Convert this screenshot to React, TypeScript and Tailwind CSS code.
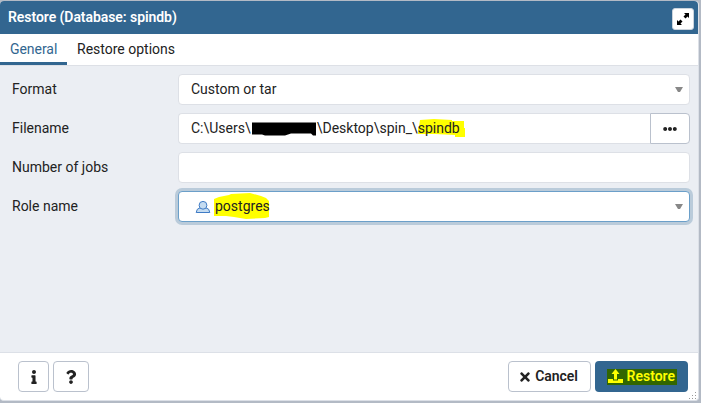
import React from "react";
import { FaEllipsisH, FaInfo, FaQuestion, FaTimes } from "react-icons/fa";

function Caret() {
  return (
    <svg className="ml-auto h-[5px] w-[8px]" viewBox="0 0 8 5">
      <path d="M0 0h8L5 5H3z" fill="#888" />
    </svg>
  );
}

function Row({ label, children }: { label: string; children: React.ReactNode }) {
  return (
    <div className="flex h-[31px] items-center">
      <div className="w-[166px] shrink-0">{label}</div>
      {children}
    </div>
  );
}

const field = "flex h-[31px] w-[512px] items-center rounded border border-[#dde0e6] bg-white pl-3 pr-[6px]";
const button = "flex h-[31px] items-center justify-center rounded border border-[#bac1cd] bg-white";

export default function App() {
  return (
    <div className="h-[403px] w-[701px] overflow-hidden bg-[#b3bac5] pr-[2px] pb-[2px] pt-px font-['Roboto',sans-serif] text-[14px] leading-[21px] text-[#222]">
      <div className="flex h-[400px] w-[699px] flex-col rounded-[4px] border-r border-b border-[#dce0e7] bg-white">
        <header className="flex h-[33px] shrink-0 items-center justify-between rounded-t-[4px] bg-[#326690] pl-2 pr-[4px] font-semibold text-white">
          <h1 className="tracking-[-0.06px]">Restore (Database: spindb)</h1>
          <button className="mt-[3px] h-[22px] w-[22px] rounded-[3px] border border-[#cbd4dd] bg-white">
            <svg className="h-5 w-5" viewBox="0 0 20 20" fill="#000">
              <path d="M11 4h5v5l-1.500-1.500-2 2-2-2 2-2zM4 11v5h5l-1.500-1.500 2-2-2-2-2 2z" />
            </svg>
          </button>
        </header>
        <nav className="flex h-[32px] shrink-0 border-b border-[#dde0e6]">
          <div className="h-[31px] w-[67px] border-b-[3px] border-[#326690] pl-[10px] pt-[5px] tracking-[-0.05px] text-[#326690]">General</div>
          <div className="pl-[10px] pt-[5px]">Restore options</div>
        </nav>
        <main className="flex h-[286px] shrink-0 flex-col gap-2 bg-[#ebeef3] pl-[12px] pt-2">
          <Row label="Format">
            <div className={field}>Custom or tar<Caret /></div>
          </Row>
          <Row label="Filename">
            <div className="flex h-[31px] w-[472px] items-center rounded-l border border-r-0 border-[#dde0e6] bg-white pl-3">
              <span>C:\Users\</span>
              <svg className="h-[15px] w-[66px] shrink-0" viewBox="0 0 66 15">
                <path d="M1 1.500h64v13h-3l-2-2H40l-6 2H14l-3-1H1z" fill="#000" />
              </svg>
              <span>\Desktop\spin_\</span>
              <span className="relative">
                <svg className="absolute -left-px top-[1px] h-[19px] w-[48px]" viewBox="0 0 48 19">
                  <path d="M3 1l14-1 18 1v1h12v7h1v9H38v-2L18 15H1V8h1z" fill="#ff0" />
                </svg>
                <span className="relative">spindb</span>
              </span>
            </div>
            <button className="flex h-[31px] w-[40px] items-center justify-center rounded-r border border-[#bac1cd] bg-white">
              <FaEllipsisH size={14} />
            </button>
          </Row>
          <Row label="Number of jobs"><div className={field} /></Row>
          <Row label="Role name">
            <div className="flex h-[31px] w-[512px] items-center rounded border border-[#6b9fc9] bg-white pl-[16px] pr-[6px] shadow-[0_0_0_3px_#bacbda]">
              <svg className="mr-1 h-[14px] w-[16px]" viewBox="0 0 16 14" fill="#c5dcf1" stroke="#3f7bc5" strokeWidth="1">
                <path d="M5 7.800Q1.500 8.500 1.200 12.500h13.600Q14.500 8.500 11 7.800" />
                <circle cx="8" cy="5.300" r="3.900" />
              </svg>
              <span className="relative">
                <svg className="absolute -left-px -top-[3px] h-[26px] w-[56px]" viewBox="0 0 56 26">
                  <path d="M0 6l5-2 10-2 2-1 19-1 11 3 5 2 3 3v16l-4 1-19 1-12-2-8-1H0z" fill="#ff0" />
                </svg>
                <span className="relative">postgres</span>
              </span>
              <Caret />
            </div>
          </Row>
        </main>
        <footer className="relative flex h-[48px] shrink-0 items-center gap-1 border-t border-[#dce0e7] pl-[18px] pr-[10px] font-semibold">
          <button className={button + " w-[31px]"}><FaInfo size={14} /></button>
          <button className={button + " w-[36px]"}><FaQuestion size={14} /></button>
          <button className={button + " ml-auto w-[83px] gap-[3px] pr-[3px]"}><FaTimes size={14} /><span className="tracking-[-0.05px]">Cancel</span></button>
          <button className="flex h-[31px] w-[93px] items-center justify-center rounded bg-[#326690] text-[#ff0]">
            <span className="flex h-[16px] w-[70px] items-center bg-[#326600] pl-px">
              <svg className="mr-1 h-[15px] w-[15px]" viewBox="0 0 15 15" fill="#ff0">
                <path d="M7.500 0l4 5H9v5.500H6V5H3.500zM0 10h5v1.500h5V10h5v4H0z" />
              </svg>
              Restore
            </span>
          </button>
          <svg className="absolute bottom-0 right-[1px] h-[9px] w-[9px]" viewBox="0 0 9 9" fill="#999">
            <path d="M7 1h1v1H7zM4 4h1v1H4zM7 4h1v1H7zM1 7h1v1H1zM4 7h1v1H4zM7 7h1v1H7z" />
          </svg>
        </footer>
      </div>
    </div>
  );
}
